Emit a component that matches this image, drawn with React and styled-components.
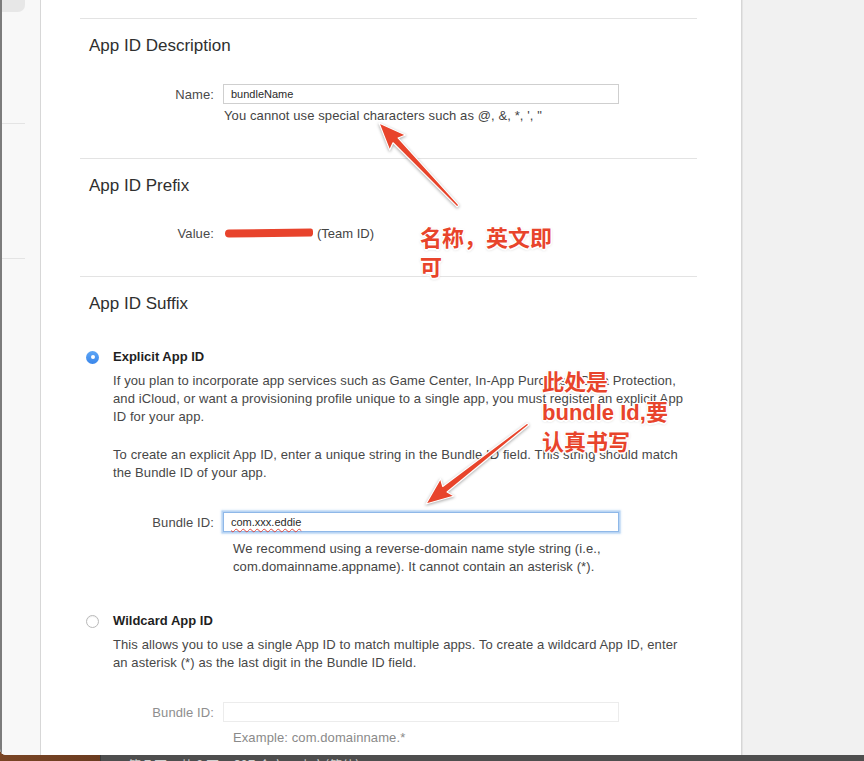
import React from 'react'
import styled, { createGlobalStyle } from 'styled-components'

const GlobalStyle = createGlobalStyle`
  html, body {
    margin: 0;
    padding: 0;
    background: #4f4f4f;
  }
  body {
    font-family: "Liberation Sans", Arial, sans-serif;
    -webkit-font-smoothing: antialiased;
  }
`

const Page = styled.div`
  position: relative;
  width: 864px;
  height: 761px;
  overflow: hidden;
  display: flex;
  flex-direction: column;
  background: linear-gradient(to right, #7a4525 0, #6b3c20 100px, #4e4e4e 100px);
`

const Window = styled.div`
  display: flex;
  height: 755px;
  background: #fff;
  border-bottom-left-radius: 6px;
  overflow: hidden;
`

const Sidebar = styled.div`
  width: 38px;
  flex-shrink: 0;
  background: #f8f8f8;
  border-left: 2px solid #7c7c7c;
  border-right: 1px solid #d7d7d7;
`

const SideTab = styled.div`
  width: 23px;
  height: 12px;
  background: #e7e7e7;
  border-bottom-right-radius: 7px;
`

const SideDivider = styled.div`
  width: 23px;
  height: 1px;
  background: #e4e4e4;
  margin-top: ${p => p.$offset}px;
`

const Main = styled.div`
  width: 700px;
  flex-shrink: 0;
  padding: 18px 0 0 39px;
  box-sizing: border-box;
  overflow: hidden;
`

const RightPane = styled.div`
  flex: 1;
  background: #f1f1f1;
  border-left: 1px solid #d6d6d6;
  box-shadow: inset 1px 0 0 #e4e4e4;
`

const Column = styled.div`
  width: 617px;
`

const Section = styled.section`
  border-top: 1px solid #e3e3e3;
  padding: 17px 0 ${p => p.$bottom || 0}px;
`

const SectionTitle = styled.h2`
  margin: 0 0 0 9px;
  font-size: 17px;
  line-height: 20px;
  font-weight: 400;
  color: #2f2f2f;
`

const FieldRow = styled.div`
  display: flex;
  align-items: center;
  gap: 9px;
  margin-top: ${p => p.$top}px;
  min-height: 20px;
`

const Label = styled.label`
  width: 134px;
  text-align: right;
  font-size: 13px;
  letter-spacing: 0.1px;
  color: ${p => (p.$disabled ? '#8e8e8e' : '#4a4a4a')};
`

const TextBox = styled.div`
  width: 396px;
  height: 20px;
  box-sizing: border-box;
  padding: 0 7px;
  display: flex;
  align-items: center;
  font-size: 11px;
  color: #2a2a2a;
  background: #fff;
  border: 1px solid ${p => (p.$disabled ? '#ececec' : '#cfcfcf')};
  ${p => p.$focused && `
    border-color: #8fb8e8;
    box-shadow: 0 0 0 1.5px #b9d5f4, 0 0 2px 2px rgba(140, 185, 235, 0.35);
  `}
`

const Misspelled = styled.span`
  text-decoration: underline wavy #e0473c;
  text-decoration-thickness: 1px;
  text-underline-offset: 2px;
`

const Help = styled.p`
  margin: ${p => p.$top}px 0 0 ${p => p.$indent}px;
  font-size: 13px;
  line-height: ${p => p.$lh || 18}px;
  letter-spacing: 0.1px;
  color: ${p => (p.$muted ? '#8a8a8a' : '#444')};
`

const Redaction = styled.span`
  display: inline-block;
  width: 88px;
  height: 8px;
  margin: 0 4px 0 2px;
  border-radius: 5px 3px 4px 5px;
  background: #e8432c;
  transform: rotate(-0.6deg);
`

const ValueText = styled.span`
  font-size: 13px;
  color: #444;
  display: flex;
  align-items: center;
`

const OptionRow = styled.div`
  display: flex;
  align-items: center;
  gap: 14px;
  margin-top: ${p => p.$top}px;
  padding-left: 6px;
  line-height: 18px;
`

const Radio = styled.span`
  width: 13px;
  height: 13px;
  box-sizing: border-box;
  border-radius: 50%;
  display: flex;
  align-items: center;
  justify-content: center;
  ${p => p.$checked ? `
    background: linear-gradient(#5ea6f6, #3a86ea);
    &::after {
      content: '';
      width: 4px;
      height: 4px;
      border-radius: 50%;
      background: #fff;
    }
  ` : `
    background: #fff;
    border: 1px solid #b9b9b9;
    box-shadow: inset 0 1px 1px rgba(0, 0, 0, 0.06);
  `}
`

const OptionTitle = styled.span`
  font-size: 13px;
  font-weight: 700;
  color: #1f1f1f;
`

const OptionText = styled.p`
  margin: ${p => p.$top}px 0 0 33px;
  font-size: 13px;
  line-height: 18px;
  letter-spacing: 0.1px;
  color: #474747;
  white-space: nowrap;
`

const Taskbar = styled.div`
  height: 6px;
  margin-left: 100px;
  padding-left: 27px;
  overflow: hidden;
  border-left: 1px solid #3a3a3a;
  font-family: "Noto Sans CJK SC", sans-serif;
  font-size: 13px;
  line-height: 20px;
  color: #cfcfcf;
  white-space: pre;
`

const Overlay = styled.svg`
  position: absolute;
  left: 0;
  top: 0;
  pointer-events: none;
  filter: drop-shadow(0 1px 1.5px rgba(0, 0, 0, 0.35));
`

const Note = styled.div`
  position: absolute;
  left: ${p => p.$x}px;
  top: ${p => p.$y}px;
  font-family: "Liberation Sans", "Noto Sans CJK SC", sans-serif;
  font-weight: 700;
  font-size: 22px;
  line-height: ${p => p.$lh}px;
  color: #e8442b;
  white-space: pre;
  text-shadow:
    -1.5px 0 #fff, 1.5px 0 #fff, 0 -1.5px #fff, 0 1.5px #fff,
    -1px -1px #fff, 1px 1px #fff, -1px 1px #fff, 1px -1px #fff,
    0 1px 3px rgba(0, 0, 0, 0.35);
`

const Arrow = ({ from, to }) => {
  const dx = to[0] - from[0]
  const dy = to[1] - from[1]
  const len = Math.hypot(dx, dy)
  const ux = dx / len
  const uy = dy / len
  const nx = -uy
  const ny = ux
  const headLen = 24
  const headW = 11
  const bx = to[0] - ux * headLen
  const by = to[1] - uy * headLen
  const nb = (w, s = 1) => `${bx + nx * w * s},${by + ny * w * s}`
  const points = [
    `${from[0] + nx * 1.2},${from[1] + ny * 1.2}`,
    nb(3.5),
    `${bx + nx * headW - ux * 3},${by + ny * headW - uy * 3}`,
    `${to[0]},${to[1]}`,
    `${bx - nx * headW - ux * 3},${by - ny * headW - uy * 3}`,
    nb(3.5, -1),
    `${from[0] - nx * 1.2},${from[1] - ny * 1.2}`,
  ].join(' ')
  return <polygon points={points} fill="#e8442b" stroke="#fff" strokeWidth="1.2" strokeLinejoin="round" />
}

export default function App() {
  return (
    <>
      <GlobalStyle />
      <Page>
        <Window>
          <Sidebar>
            <SideTab />
            <SideDivider $offset={111} />
            <SideDivider $offset={134} />
          </Sidebar>
          <Main>
            <Column>
              <Section $bottom={34}>
                <SectionTitle>App ID Description</SectionTitle>
                <FieldRow $top={28}>
                  <Label>Name:</Label>
                  <TextBox>bundleName</TextBox>
                </FieldRow>
                <Help $top={4} $indent={144} $lh={16}>
                  You cannot use special characters such as @, &amp;, *, ', "
                </Help>
              </Section>

              <Section $bottom={33}>
                <SectionTitle>App ID Prefix</SectionTitle>
                <FieldRow $top={27}>
                  <Label>Value:</Label>
                  <ValueText>
                    <Redaction />
                    (Team ID)
                  </ValueText>
                </FieldRow>
              </Section>

              <Section>
                <SectionTitle>App ID Suffix</SectionTitle>
                <OptionRow $top={34}>
                  <Radio $checked />
                  <OptionTitle>Explicit App ID</OptionTitle>
                </OptionRow>
                <OptionText $top={6}>
                  If you plan to incorporate app services such as Game Center, In-App Purchase, Data Protection,<br />
                  and iCloud, or want a provisioning profile unique to a single app, you must register an explicit App<br />
                  ID for your app.
                </OptionText>
                <OptionText $top={20}>
                  To create an explicit App ID, enter a unique string in the Bundle ID field. This string should match<br />
                  the Bundle ID of your app.
                </OptionText>
                <FieldRow $top={30}>
                  <Label>Bundle ID:</Label>
                  <TextBox $focused>
                    <Misspelled>com.xxx.eddie</Misspelled>
                  </TextBox>
                </FieldRow>
                <Help $top={8} $indent={153}>
                  We recommend using a reverse-domain name style string (i.e.,<br />
                  com.domainname.appname). It cannot contain an asterisk (*).
                </Help>

                <OptionRow $top={36}>
                  <Radio />
                  <OptionTitle>Wildcard App ID</OptionTitle>
                </OptionRow>
                <OptionText $top={6}>
                  This allows you to use a single App ID to match multiple apps. To create a wildcard App ID, enter<br />
                  an asterisk (*) as the last digit in the Bundle ID field.
                </OptionText>
                <FieldRow $top={30}>
                  <Label $disabled>Bundle ID:</Label>
                  <TextBox $disabled />
                </FieldRow>
                <Help $top={7} $indent={153} $muted>
                  Example: com.domainname.*
                </Help>
              </Section>
            </Column>
          </Main>
          <RightPane />
        </Window>
        <Taskbar>第 7 页，共 8 页     397 个字     中文(简体)</Taskbar>

        <Overlay width="864" height="761" viewBox="0 0 864 761">
          <Arrow from={[458, 206]} to={[379, 123]} />
          <Arrow from={[528, 424]} to={[426, 504]} />
        </Overlay>
        <Note $x={420} $y={224} $lh={29}>{'名称，英文即\n可'}</Note>
        <Note $x={542} $y={368} $lh={30}>{'此处是\nbundle Id,要\n认真书写'}</Note>
      </Page>
    </>
  )
}
